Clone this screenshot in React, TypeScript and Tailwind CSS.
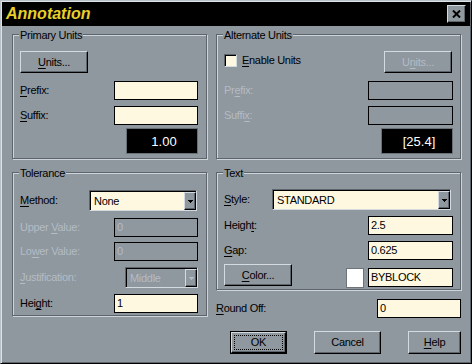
import React from 'react'

const BG = 'bg-[#8f979f]'
const raised =
  'border border-t-[#d3dae0] border-l-[#d3dae0] border-r-black border-b-black shadow-[inset_-1px_-1px_0_#5d646b]'
const sunken =
  'border border-t-[#5d646b] border-l-[#5d646b] border-r-[#d3dae0] border-b-[#d3dae0] shadow-[inset_1px_1px_0_#000]'
const dim = 'text-[#b4bcc4]'

function U({ c }: { c: string }) {
  return <span className="underline decoration-1 underline-offset-[2px]">{c}</span>
}

function Button({
  className = '',
  disabled,
  children,
}: {
  className?: string
  disabled?: boolean
  children: React.ReactNode
}) {
  return (
    <div className={`flex items-center justify-center ${BG} ${raised} ${disabled ? dim : 'text-black'} ${className}`}>
      {children}
    </div>
  )
}

function Field({ value = '', w = 'w-[84px]', disabled }: { value?: string; w?: string; disabled?: boolean }) {
  return (
    <div
      className={`flex h-[19px] ${w} items-center border border-black px-[2px] ${
        disabled ? `${BG} ${dim}` : 'bg-[#fff8e0] text-black'
      }`}
    >
      {value}
    </div>
  )
}

function Arrow({ disabled }: { disabled?: boolean }) {
  return (
    <svg width="5" height="3" viewBox="0 0 5 3">
      <path d="M0 0H5V1H4V2H3V3H2V2H1V1H0Z" fill={disabled ? '#b4bcc4' : '#000'} />
    </svg>
  )
}

function Select({ value, className = '', disabled }: { value: string; className?: string; disabled?: boolean }) {
  return (
    <div className={`flex h-[21px] pl-[1px] pt-[1px] ${sunken} ${className}`}>
      <div className={`flex flex-1 items-center pl-[3px] ${disabled ? `${BG} ${dim}` : 'bg-[#fff8e0] text-black'}`}>
        {value}
      </div>
      <div className={`flex w-[12px] items-center justify-center ${BG} ${raised}`}>
        <Arrow disabled={disabled} />
      </div>
    </div>
  )
}

function Readout({ value }: { value: string }) {
  return (
    <div className="flex h-[26px] w-[72px] items-center justify-center border border-[#687078] bg-black pl-[4px] text-[13px] tracking-normal text-white">
      {value}
    </div>
  )
}

function Row({
  label,
  className = '',
  disabled,
  children,
}: {
  label: React.ReactNode
  className?: string
  disabled?: boolean
  children: React.ReactNode
}) {
  return (
    <div className={`flex items-center justify-between ${className}`}>
      <span className={disabled ? dim : ''}>{label}</span>
      {children}
    </div>
  )
}

function Group({ title, className = '', children }: { title: string; className?: string; children: React.ReactNode }) {
  return (
    <div
      className={`relative border border-[#5d646b] shadow-[inset_1px_1px_0_#cdd4da,1px_1px_0_#cdd4da] ${className}`}
    >
      <span className={`absolute left-[6px] top-[-6px] px-[1px] ${BG}`}>{title}</span>
      {children}
    </div>
  )
}

export default function App() {
  return (
    <div
      className={`h-[364px] w-[472px] ${BG} select-none border border-t-[#b9c1c8] border-l-[#b9c1c8] border-r-black border-b-black p-[1px] font-['Liberation_Sans',Arial,sans-serif] text-[11px] leading-[13px] tracking-[-0.3px] text-black shadow-[inset_1px_1px_0_#dde3e8,inset_-1px_-1px_0_#5d646b]`}
    >
      <div className="flex h-[24px] items-center justify-between bg-black px-[4px]">
        <span className="text-[16px] font-bold italic leading-[24px] tracking-normal text-[#e8d028]">Annotation</span>
        <div className={`flex h-[18px] w-[19px] items-center justify-center ${BG} ${raised}`}>
          <svg width="9" height="8" viewBox="0 0 9 8">
            <path d="M1 0.5L8 7.5M8 0.5L1 7.5" stroke="#000" strokeWidth="2" />
          </svg>
        </div>
      </div>

      <div className="grid grid-cols-[195px_245px] items-start gap-x-[9px] gap-y-[13px] pl-[10px] pt-[8px]">
        {/* Primary Units */}
        <Group title="Primary Units" className="h-[125px] pl-[7px] pr-[8px] pt-[16px]">
          <Button className="h-[22px] w-[68px]">
            <U c="U" />
            nits...
          </Button>
          <Row className="mt-[8px]" label={<><U c="P" />refix:</>}>
            <Field />
          </Row>
          <Row className="mt-[6px]" label={<><U c="S" />uffix:</>}>
            <Field />
          </Row>
          <div className="mt-[3px] flex justify-end">
            <Readout value="1.00" />
          </div>
        </Group>

        {/* Alternate Units */}
        <Group title="Alternate Units" className="h-[125px] pl-[7px] pr-[7px] pt-[16px]">
          <div className="flex items-start justify-between">
            <div className="mt-[3px] flex items-start">
              <div className={`h-[13px] w-[13px] bg-[#fff8e0] ${sunken}`} />
              <span className="ml-[5px]">
                <U c="E" />
                nable Units
              </span>
            </div>
            <Button disabled className="mr-[1px] h-[22px] w-[68px]">
              U<U c="n" />
              its...
            </Button>
          </div>
          <Row className="mt-[8px]" disabled label={<>Pr<U c="e" />fix:</>}>
            <Field disabled w="w-[85px]" />
          </Row>
          <Row className="mt-[6px]" disabled label={<>Suffi<U c="x" />:</>}>
            <Field disabled w="w-[85px]" />
          </Row>
          <div className="mt-[3px] flex justify-end">
            <Readout value="[25.4]" />
          </div>
        </Group>

        {/* Tolerance */}
        <Group title="Tolerance" className="h-[144px] pl-[7px] pr-[8px] pt-[17px]">
          <Row label={<><U c="M" />ethod:</>}>
            <Select value="None" className="mr-[1px] w-[108px]" />
          </Row>
          <Row className="mt-[7px]" disabled label={<>Upper <U c="V" />alue:</>}>
            <Field value="0" disabled />
          </Row>
          <Row className="mt-[5px]" disabled label={<>Lo<U c="w" />er Value:</>}>
            <Field value="0" disabled />
          </Row>
          <Row className="mt-[6px]" disabled label={<><U c="J" />ustification:</>}>
            <Select value="Middle" disabled className="w-[73px]" />
          </Row>
          <Row className="mt-[6px]" label={<>Hei<U c="g" />ht:</>}>
            <Field value="1" />
          </Row>
        </Group>

        {/* Text + Round Off + buttons */}
        <div className="flex flex-col">
          <Group title="Text" className="h-[118px] pl-[7px] pr-[7px] pt-[16px]">
            <Row label={<><U c="S" />tyle:</>}>
              <Select value="STANDARD" className="mr-[2px] w-[179px]" />
            </Row>
            <Row className="mt-[6px]" label={<>Heigh<U c="t" />:</>}>
              <Field value="2.5" w="w-[85px]" />
            </Row>
            <Row className="mt-[6px]" label={<><U c="G" />ap:</>}>
              <Field value="0.625" w="w-[85px]" />
            </Row>
            <div className="mt-[4px] flex items-start">
              <Button className="h-[22px] w-[68px]">
                <U c="C" />
                olor...
              </Button>
              <div className="ml-auto mt-[4px] h-[20px] w-[18px] border border-[#6d747b] bg-white" />
              <div className="ml-[4px] mt-[4px]">
                <Field value="BYBLOCK" w="w-[85px]" />
              </div>
            </div>
          </Group>

          <Row className="mt-[9px]" label={<><U c="R" />ound Off:</>}>
            <Field value="0" />
          </Row>

          <div className="mt-[13px] flex justify-end gap-[27px]">
            <div className="h-[23px] w-[57px] border border-black">
              <div className={`flex h-full w-full p-[2px] ${BG} ${raised}`}>
                <div className="flex flex-1 items-center justify-center border border-dotted border-black">OK</div>
              </div>
            </div>
            <Button className="h-[23px] w-[67px]">Cancel</Button>
            <Button className="h-[23px] w-[53px]">
              <U c="H" />
              elp
            </Button>
          </div>
        </div>
      </div>
    </div>
  )
}
